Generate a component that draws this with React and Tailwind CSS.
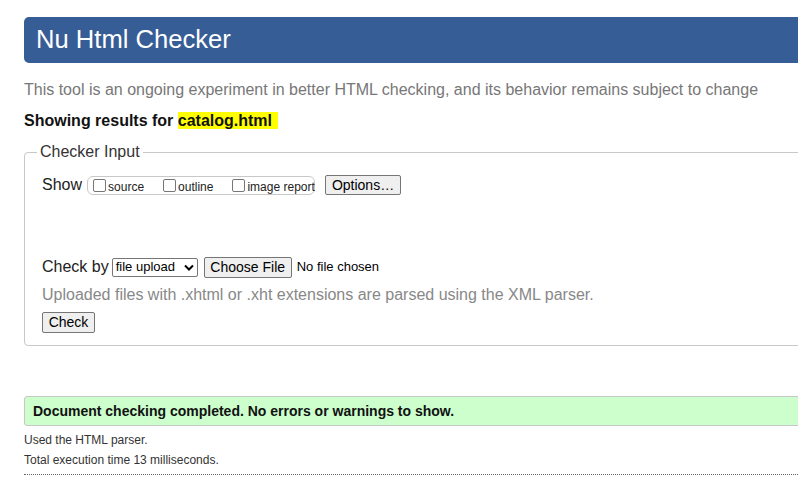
import React from "react";

const Box = ({ label }) => (
  <label className="flex shrink-0 items-center whitespace-nowrap">
    <span className="ml-[5px] mr-[2px] inline-block h-[13px] w-[13px] shrink-0 rounded-[2px] border border-[#767676] bg-white" />
    <span className="mt-[3px] text-[12px] leading-none text-[#222]">{label}</span>
  </label>
);

const Btn = ({ children, className = "" }) => (
  <span
    className={
      "flex shrink-0 items-center justify-center whitespace-nowrap rounded-[2px] border border-[#767676] bg-[#efefef] text-[14px] text-black " +
      className
    }
  >
    {children}
  </span>
);

const App = () => {
  return (
    <div
      className="h-[492px] w-[798px] overflow-hidden bg-white"
      style={{ fontFamily: '"Liberation Sans", Arial, sans-serif' }}
    >
      <div className="w-[830px] pl-[24px] pt-[17px]">
        <div className="flex h-[46px] items-center rounded-l-[5px] bg-[#365d95] pl-[12px]">
          <h1 className="text-[25.6px] leading-none text-white">Nu Html Checker</h1>
        </div>

        <p className="mt-[18px] text-[16px] leading-[18px] text-[#777]">
          This tool is an ongoing experiment in better HTML checking, and its behavior remains subject to change
        </p>
        <p className="mt-[12px] text-[16px] font-bold leading-[20px] text-[#111]">
          Showing results for{" "}
          <span className="bg-[#ffff00] pr-[6px]">catalog.html</span>
        </p>

        <div className="relative mt-[21px] h-[194px] rounded-[4px] border border-[#c8c8c8]">
          <span className="absolute left-[12px] top-[-10px] bg-white px-[3px] text-[16px] leading-[18px] text-[#333]">
            Checker Input
          </span>

          <div className="flex items-center pl-[17px] pt-[20px]">
            <span className="text-[16px] text-[#222]">Show</span>
            <div className="ml-[5px] flex h-[19px] w-[228px] shrink-0 items-center gap-[14px] rounded-[6px] border border-[#c8c8c8]">
              <Box label="source" />
              <Box label="outline" />
              <Box label="image report" />
            </div>
            <Btn className="ml-[10px] h-[20px] w-[76px]">Options…</Btn>
          </div>

          <div className="mt-[58px] flex items-center pl-[17px]">
            <span className="text-[16px] text-[#222]">Check by</span>
            <span className="ml-[3px] flex h-[19px] w-[86px] items-center justify-between rounded-[2px] border border-[#767676] pl-[3px] pr-[3px] text-[13px] text-black">
              file upload
              <svg width="10" height="7" viewBox="0 0 10 7">
                <path d="M1 1.5 L5 5.5 L9 1.5" fill="none" stroke="#000" strokeWidth="2" />
              </svg>
            </span>
            <Btn className="ml-[6px] h-[21px] w-[88px]">Choose File</Btn>
            <span className="ml-[5px] text-[13px] text-black">No file chosen</span>
          </div>

          <p className="mt-[7px] pl-[17px] text-[16px] leading-[18px] text-[#888]">
            Uploaded files with .xhtml or .xht extensions are parsed using the XML parser.
          </p>

          <div className="mt-[8px] pl-[17px]">
            <Btn className="h-[21px] w-[53px]">Check</Btn>
          </div>
        </div>

        <div className="mt-[50px] flex h-[30px] items-center rounded-l-[3px] border border-[#c8c8c8] bg-[#ccffcc] pl-[8px]">
          <span className="text-[14px] font-bold text-[#111]">
            Document checking completed. No errors or warnings to show.
          </span>
        </div>

        <p className="mt-[6px] text-[12px] leading-[16px] text-[#333]">Used the HTML parser.</p>
        <p className="mt-[4px] text-[12px] leading-[16px] text-[#333]">
          Total execution time 13 milliseconds.
        </p>
        <div className="mt-[6px] border-t border-dotted border-[#666]" />
      </div>
    </div>
  );
};

export default App;
